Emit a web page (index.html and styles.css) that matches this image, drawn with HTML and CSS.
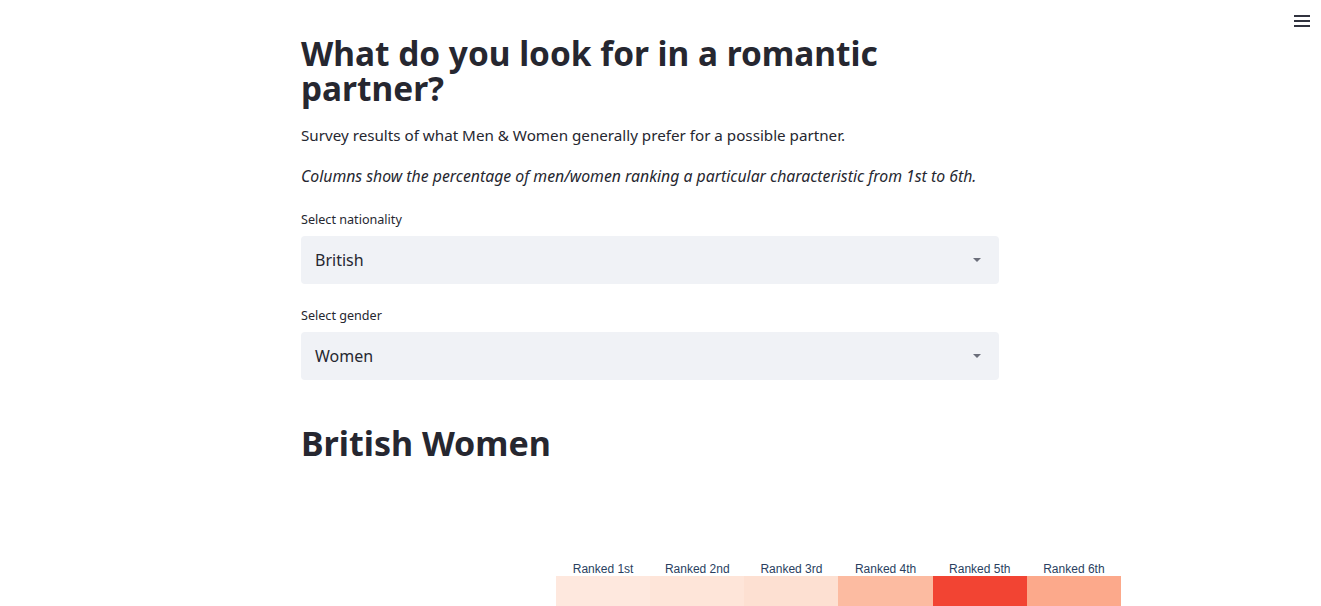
FILE: index.html
```html
<!DOCTYPE html>
<html lang="en">
<head>
<meta charset="utf-8">
<title>What do you look for in a romantic partner?</title>
<link rel="stylesheet" href="styles.css">
</head>
<body>
<div class="app">
  <header class="toolbar">
    <button class="menu-btn" aria-label="Menu">
      <svg width="16" height="14" viewBox="0 0 16 14"><rect x="0" y="1" width="16" height="2" fill="#31333f"/><rect x="0" y="6" width="16" height="2" fill="#31333f"/><rect x="0" y="11" width="16" height="2" fill="#31333f"/></svg>
    </button>
  </header>
  <main class="block">
    <h1 class="title">What do you look for in a romantic partner?</h1>
    <p class="lead">Survey results of what Men &amp; Women generally prefer for a possible partner.</p>
    <p class="note">Columns show the percentage of men/women ranking a particular characteristic from 1st to 6th.</p>

    <div class="field">
      <label class="field-label">Select nationality</label>
      <div class="select"><span class="select-value">British</span><span class="caret"></span></div>
    </div>
    <div class="field">
      <label class="field-label">Select gender</label>
      <div class="select"><span class="select-value">Women</span><span class="caret"></span></div>
    </div>

    <h2 class="subtitle">British Women</h2>

    <div class="chart">
      <div class="axis-spacer"></div>
      <div class="heatmap">
        <div class="col-label">Ranked 1st</div>
        <div class="col-label">Ranked 2nd</div>
        <div class="col-label">Ranked 3rd</div>
        <div class="col-label">Ranked 4th</div>
        <div class="col-label">Ranked 5th</div>
        <div class="col-label">Ranked 6th</div>
        <div class="cell c1"></div>
        <div class="cell c2"></div>
        <div class="cell c3"></div>
        <div class="cell c4"></div>
        <div class="cell c5"></div>
        <div class="cell c6"></div>
      </div>
    </div>
  </main>
</div>
</body>
</html>
```
FILE: styles.css
```css
html, body {
  margin: 0;
  padding: 0;
  background: #ffffff;
}
body {
  font-family: "Noto Sans", sans-serif;
  color: #262730;
  overflow: hidden;
}
.app {
  width: 1300px;
}
.toolbar {
  position: fixed;
  top: 14px;
  right: 11px;
}
.menu-btn {
  border: 0;
  background: transparent;
  padding: 0;
  display: block;
  width: 16px;
  height: 14px;
}
.menu-btn svg { display: block; }

.block {
  width: 698px;
  margin: 0 auto;
  padding-top: 36px;
  display: flex;
  flex-direction: column;
}
.title {
  margin: 0;
  font-size: 33.4px;
  line-height: 35px;
  font-weight: 700;
  color: #262730;
}
.lead {
  margin: 17px 0 0;
  font-size: 15.2px;
  line-height: 24px;
}
.note {
  margin: 17px 0 0;
  font-size: 15.8px;
  line-height: 24px;
  font-style: italic;
}
.field {
  margin-top: 23px;
  display: flex;
  flex-direction: column;
}
.field + .field {
  margin-top: 23px;
}
.field-label {
  font-size: 12.6px;
  line-height: 16px;
  margin-bottom: 8px;
  padding-top: 1px;
}
.select {
  height: 48px;
  background: #f0f2f6;
  border-radius: 4px;
  display: flex;
  align-items: center;
  justify-content: space-between;
  padding: 0 18px 0 14px;
}
.select-value {
  font-size: 16px;
}
.caret {
  width: 0;
  height: 0;
  border-left: 4px solid transparent;
  border-right: 4px solid transparent;
  border-top: 4px solid #6b6e7a;
}
.subtitle {
  margin: 43px 0 0;
  font-size: 34px;
  line-height: 40px;
  font-weight: 700;
}
.chart {
  margin-top: 95px;
  width: 820px;
  display: flex;
}
.axis-spacer {
  width: 255px;
  flex: none;
}
.heatmap {
  flex: none;
  width: 565px;
  display: grid;
  grid-template-columns: repeat(6, 1fr);
  grid-template-rows: 18px 80px;
}
.col-label {
  font-family: "Liberation Sans", Arial, sans-serif;
  font-size: 12px;
  color: #2a3f5f;
  text-align: center;
  line-height: 14px;
  align-self: end;
}
.cell { height: 80px; }
.c1 { background: #fee8de; }
.c2 { background: #fee5d9; }
.c3 { background: #fde0d2; }
.c4 { background: #fcbba1; }
.c5 { background: #f24433; }
.c6 { background: #fca98b; }
```
